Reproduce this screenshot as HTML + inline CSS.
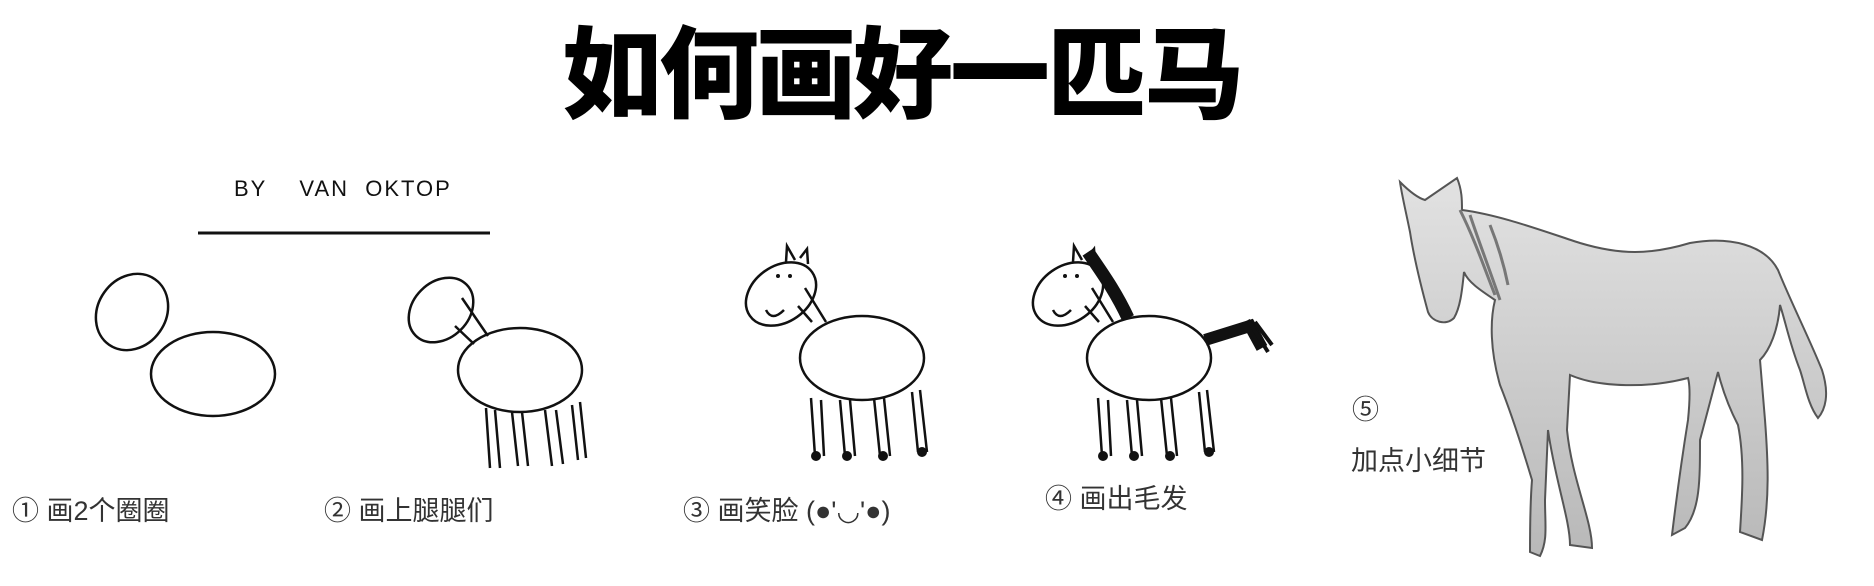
<!DOCTYPE html>
<html><head><meta charset="utf-8"><style>
html,body{margin:0;padding:0;background:#fff;}
body{width:1874px;height:586px;position:relative;overflow:hidden;font-family:"Liberation Sans","Noto Sans CJK SC",sans-serif;}
.t{position:absolute;left:562px;top:12px;font-size:100px;line-height:110px;font-weight:900;letter-spacing:-3px;color:#000;white-space:nowrap;font-family:"Noto Sans CJK SC",sans-serif;}
.l{position:absolute;font-size:27px;color:#333;white-space:nowrap;font-family:"Liberation Sans","Noto Sans CJK SC",sans-serif;line-height:30px;}
.by{position:absolute;left:234px;top:176px;font-size:22px;letter-spacing:2px;color:#111;font-family:"Liberation Sans",sans-serif;white-space:pre;}
</style></head><body>
<div class="t">如何画好一匹马</div>
<div class="by">BY    VAN  OKTOP</div>
<svg width="1874" height="586" style="position:absolute;left:0;top:0" viewBox="0 0 1874 586">
<defs><linearGradient id="g" x1="0" y1="0" x2="0" y2="1"><stop offset="0" stop-color="#e2e2e2"/><stop offset="1" stop-color="#b8b8b8"/></linearGradient></defs>
<line x1="198" y1="233" x2="490" y2="233" stroke="#111" stroke-width="3"/>
<g fill="none" stroke="#111" stroke-width="2.5">
<ellipse cx="132" cy="312" rx="34" ry="40" transform="rotate(35 132 312)"/>
<ellipse cx="213" cy="374" rx="62" ry="42"/>
<ellipse cx="441" cy="310" rx="36" ry="28" transform="rotate(-45 441 310)"/>
<path d="M462,298 L488,336 M455,326 L474,344"/>
<ellipse cx="520" cy="370" rx="62" ry="42"/>
<path d="M486,408 L490,468 M495,410 L500,468 M512,412 L518,466 M522,412 L528,466 M545,410 L552,466 M556,410 L563,464 M572,405 L578,460 M580,402 L586,458"/>
<g id="h3">
<ellipse cx="781" cy="294" rx="38" ry="28" transform="rotate(-35 781 294)"/>
<path d="M786,262 L787,246 L795,260 M800,258 L807,249 L808,264"/>
<path d="M805,288 L826,322 M798,306 L812,322"/>
<path d="M766,310 Q772,322 784,310"/>
<ellipse cx="862" cy="358" rx="62" ry="42"/>
<path d="M811,398 L815,456 M821,400 L824,456 M840,400 L845,456 M850,400 L855,456 M874,398 L880,456 M884,398 L890,456 M912,392 L918,452 M920,390 L927,452"/>
<g fill="#111" stroke="none"><circle cx="778" cy="276" r="2"/><circle cx="790" cy="276" r="2"/><circle cx="816" cy="456" r="5"/><circle cx="847" cy="456" r="5"/><circle cx="883" cy="456" r="5"/><circle cx="922" cy="452" r="5"/></g>
</g>
<use href="#h3" transform="translate(287,0)"/>
<path d="M1088,252 C1100,270 1115,290 1128,318" stroke-width="13"/>
<path d="M1205,340 L1250,326 L1262,348" stroke-width="12"/>
<path d="M1248,320 L1268,352 M1255,322 L1272,345" stroke-width="4"/>
</g>
<path d="M1400,182 C1410,192 1418,198 1425,200 L1457,178 C1462,190 1462,200 1462,210 C1500,215 1540,230 1580,243 C1620,255 1650,255 1690,243 C1730,236 1765,245 1778,270 C1790,300 1810,340 1822,370 C1830,395 1825,410 1818,418 C1808,405 1805,385 1800,370 C1790,345 1785,320 1780,305 C1778,330 1770,350 1760,360 L1765,420 C1768,460 1770,500 1762,540 L1740,532 C1742,500 1745,460 1738,425 C1725,400 1720,380 1718,372 L1700,440 C1700,480 1700,510 1685,528 L1672,535 C1675,510 1680,470 1688,420 C1690,400 1690,385 1688,378 C1650,388 1600,388 1570,375 L1567,430 C1572,480 1592,520 1592,548 L1570,545 C1570,520 1555,480 1548,430 L1545,500 C1545,525 1548,540 1540,556 L1530,552 C1530,530 1530,505 1532,480 C1520,440 1510,410 1500,385 C1490,350 1490,320 1495,300 C1480,290 1468,282 1464,272 C1462,292 1460,308 1454,318 C1446,326 1432,322 1428,312 C1422,290 1414,258 1410,232 C1406,212 1402,196 1400,182 Z" fill="url(#g)" stroke="#555" stroke-width="2"/>
<path d="M1460,210 C1475,240 1485,270 1495,295 M1470,215 C1480,245 1488,265 1500,300 M1490,225 C1500,250 1505,270 1508,285" stroke="#777" stroke-width="3" fill="none"/>
</svg>
<div class="l" style="left:12px;top:496px">① 画2个圈圈</div>
<div class="l" style="left:324px;top:496px">② 画上腿腿们</div>
<div class="l" style="left:683px;top:496px">③ 画笑脸 (●'◡'●)</div>
<div class="l" style="left:1045px;top:484px">④ 画出毛发</div>
<div class="l" style="left:1352px;top:395px">⑤</div>
<div class="l" style="left:1351px;top:446px">加点小细节</div>
</body></html>
